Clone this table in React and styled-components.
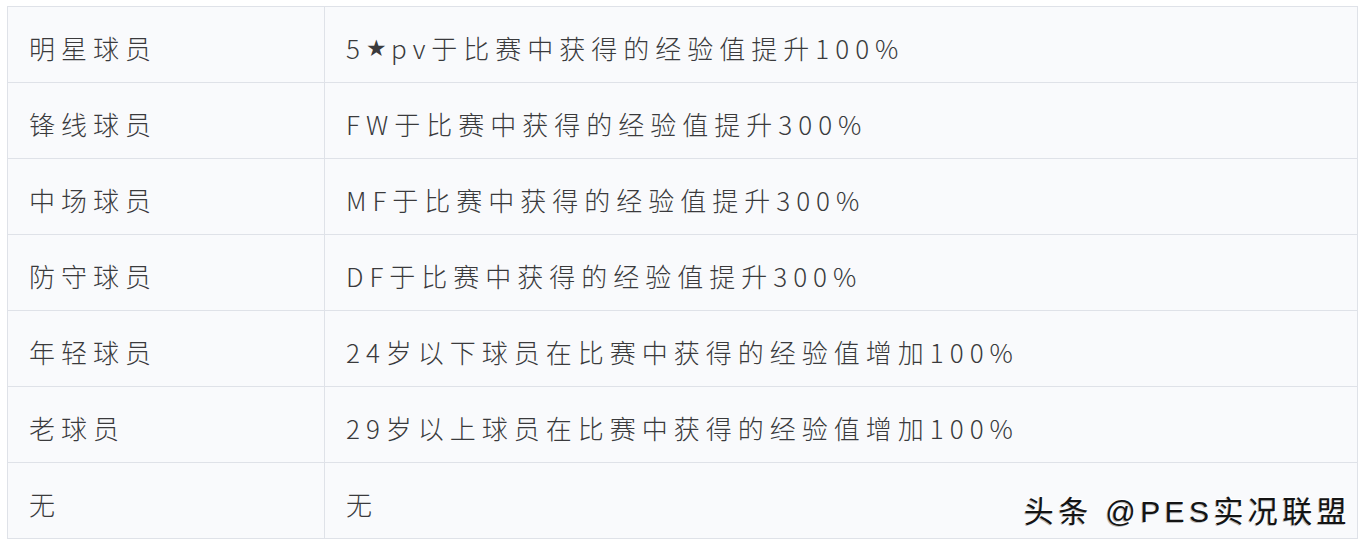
import React from 'react';
import styled, { createGlobalStyle } from 'styled-components';

const GlobalStyle = createGlobalStyle`
  html, body {
    margin: 0;
    padding: 0;
    background: #ffffff;
  }
`;

const Page = styled.div`
  position: relative;
  width: 1366px;
  height: 544px;
  padding: 6px 0 0 7px;
  box-sizing: border-box;
  font-family: "Noto Sans CJK SC", "Noto Sans", sans-serif;
`;

const Table = styled.div`
  display: grid;
  grid-template-columns: 316px 1fr;
  grid-auto-rows: 75px;
  gap: 1px;
  width: 1351px;
  padding: 1px;
  box-sizing: border-box;
  background: #dfe2e8;
`;

const Cell = styled.div`
  display: flex;
  align-items: center;
  padding: 6px 0 0 21px;
  box-sizing: border-box;
  background: #f9fafc;
  color: #3a3a3c;
  font-size: 26px;
  font-weight: 300;
  letter-spacing: 6px;
  white-space: nowrap;
`;

const Star = styled.span`
  font-family: "DejaVu Sans", sans-serif;
  font-size: 23px;
  letter-spacing: 4px;
`;

const Watermark = styled.div`
  position: absolute;
  right: 15px;
  top: 487px;
  font-family: "Liberation Sans", "Noto Sans CJK SC", sans-serif;
  font-size: 30px;
  letter-spacing: 4.4px;
  color: #141414;
  text-shadow: -1px 1px 0 rgba(0, 0, 0, 0.25), 1px -1px 0 #ffffff;
  white-space: nowrap;
`;

const rows = [
  ['明星球员', <>5<Star>★</Star>pv于比赛中获得的经验值提升100%</>],
  ['锋线球员', 'FW于比赛中获得的经验值提升300%'],
  ['中场球员', 'MF于比赛中获得的经验值提升300%'],
  ['防守球员', 'DF于比赛中获得的经验值提升300%'],
  ['年轻球员', '24岁以下球员在比赛中获得的经验值增加100%'],
  ['老球员', '29岁以上球员在比赛中获得的经验值增加100%'],
  ['无', '无'],
];

const App = () => (
  <Page>
    <GlobalStyle />
    <Table>
      {rows.map(([name, effect]) => (
        <React.Fragment key={name}>
          <Cell>{name}</Cell>
          <Cell>{effect}</Cell>
        </React.Fragment>
      ))}
    </Table>
    <Watermark>头条 @PES实况联盟</Watermark>
  </Page>
);

export default App;
